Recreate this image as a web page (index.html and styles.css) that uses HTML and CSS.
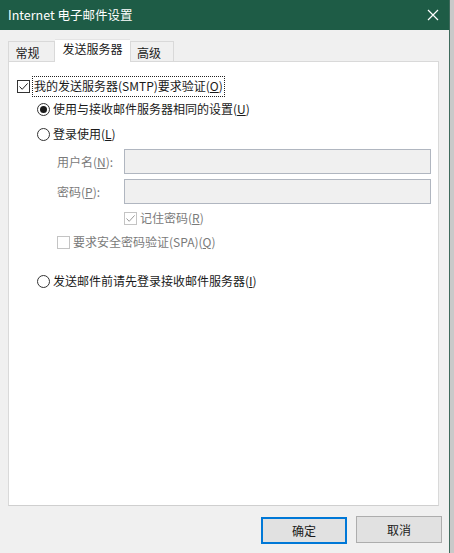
FILE: index.html
```html
<!DOCTYPE html>
<html lang="zh-CN">
<head>
<meta charset="utf-8">
<title>Internet 电子邮件设置</title>
<link rel="stylesheet" href="styles.css">
</head>
<body>
<div class="window">
  <div class="titlebar">
    <span class="title">Internet 电子邮件设置</span>
    <svg class="close" width="12" height="12" viewBox="0 0 12 12"><path d="M1 1 L11 11 M11 1 L1 11" stroke="#fff" stroke-width="1.2" fill="none"/></svg>
  </div>
  <div class="tabs">
    <div class="tab tab-general">常规</div>
    <div class="tab tab-active">发送服务器</div>
    <div class="tab tab-adv">高级</div>
  </div>
  <div class="panel">
    <div class="row row1">
      <span class="box checked"><svg width="11" height="11" viewBox="0 0 11 11"><path d="M1.5 5.5 L4.2 8.3 L9.6 2.4" stroke="#222" stroke-width="1" fill="none"/></svg></span>
      <span class="focus">我的发送服务器(SMTP)要求验证(<u>O</u>)</span>
    </div>
    <div class="row row2 indent1">
      <span class="radio on"></span>
      <span class="lbl">使用与接收邮件服务器相同的设置(<u>U</u>)</span>
    </div>
    <div class="row row3 indent1">
      <span class="radio"></span>
      <span class="lbl">登录使用(<u>L</u>)</span>
    </div>
    <div class="field row4">
      <span class="flabel">用户名(<u>N</u>):</span>
      <span class="input"></span>
    </div>
    <div class="field row5">
      <span class="flabel">密码(<u>P</u>):</span>
      <span class="input"></span>
    </div>
    <div class="row row6 indent3">
      <span class="box dis"><svg width="11" height="11" viewBox="0 0 11 11"><path d="M1.5 5.5 L4.2 8.3 L9.6 2.4" stroke="#9a9a9a" stroke-width="1" fill="none"/></svg></span>
      <span class="lbl gray">记住密码(<u>R</u>)</span>
    </div>
    <div class="row row7 indent2">
      <span class="box dis"></span>
      <span class="lbl gray">要求安全密码验证(SPA)(<u>Q</u>)</span>
    </div>
    <div class="row row8 indent1">
      <span class="radio"></span>
      <span class="lbl">发送邮件前请先登录接收邮件服务器(<u>I</u>)</span>
    </div>
  </div>
  <div class="footer">
    <button class="btn primary">确定</button>
    <button class="btn">取消</button>
  </div>
</div>
</body>
</html>
```
FILE: styles.css
```css
html, body {
  margin: 0;
  padding: 0;
}
body {
  background: #c9c9c9;
  width: 454px;
  height: 553px;
  overflow: hidden;
  font-family: "Noto Sans CJK SC", "Microsoft YaHei", sans-serif;
  font-size: 12px;
  color: #1a1a1a;
}
.window {
  width: 449px;
  height: 553px;
  background: #f0f0f0;
  border-right: 1px solid #3f6a5c;
  display: flex;
  flex-direction: column;
}
.titlebar {
  height: 30px;
  background: #1e5c46;
  color: #fff;
  display: flex;
  align-items: center;
  justify-content: space-between;
  padding: 0 9px 0 8px;
  font-size: 12.5px;
}
.title {
  line-height: 30px;
}
.close {
  margin-right: 1px;
}
.tabs {
  display: flex;
  align-items: flex-end;
  margin-top: 9px;
  padding-left: 8px;
  height: 22px;
  position: relative;
  z-index: 1;
}
.tab {
  box-sizing: border-box;
  height: 20px;
  border: 1px solid #d9d9d9;
  border-bottom: none;
  background: #f0f0f0;
  display: flex;
  align-items: center;
  justify-content: center;
  line-height: 1;
}
.tab-general {
  width: 47px;
  padding-right: 8px;
  padding-top: 3px;
}
.tab-active {
  width: 75px;
  height: 23px;
  background: #fff;
  margin-bottom: -1px;
  border-left: none;
  border-right: none;
  border-top: 1px solid #e4e4e4;
  padding-bottom: 4px;
}
.tab-adv {
  width: 44px;
  padding-right: 6px;
  padding-top: 3px;
  border-left: 1px solid #d9d9d9;
}
.panel {
  box-sizing: border-box;
  margin-left: 8px;
  width: 431px;
  height: 445px;
  background: #fff;
  border: 1px solid #d9d9d9;
  border-bottom-color: #cfcfcf;
  padding-top: 14px;
  display: flex;
  flex-direction: column;
}
.row {
  display: flex;
  align-items: center;
  height: 20px;
}
.row1 { padding-left: 8px; }
.indent1 { padding-left: 28px; }
.indent2 { padding-left: 48px; }
.indent3 { padding-left: 115px; }
.row2 { margin-top: 3px; }
.row3 { margin-top: 5px; }
.row4 { margin-top: 5px; }
.row5 { margin-top: 5px; }
.row6 { margin-top: 5px; height: 18px; }
.row7 { margin-top: 6px; height: 18px; }
.row8 { margin-top: 20px; }
.box {
  box-sizing: border-box;
  width: 13px;
  height: 13px;
  border: 1px solid #333;
  background: #fff;
  display: flex;
  align-items: center;
  justify-content: center;
  flex: none;
}
.box.dis {
  border-color: #c4c4c4;
}
.focus {
  margin-left: 3px;
  outline: 1px dotted #222;
  padding: 1px 1px 2px 1px;
  line-height: 16px;
}
.radio {
  box-sizing: border-box;
  width: 13px;
  height: 13px;
  border: 1px solid #333;
  border-radius: 50%;
  flex: none;
  display: flex;
  align-items: center;
  justify-content: center;
}
.radio.on::after {
  content: "";
  width: 7px;
  height: 7px;
  border-radius: 50%;
  background: #1a1a1a;
}
.lbl {
  margin-left: 3px;
  line-height: 16px;
}
.gray {
  color: #7a7a7a;
}
.field {
  display: flex;
  align-items: center;
  height: 25px;
  padding-left: 48px;
}
.flabel {
  width: 67px;
  color: #7a7a7a;
}
.input {
  box-sizing: border-box;
  width: 307px;
  height: 25px;
  background: #f0f0f0;
  border: 1px solid #b0b6c0;
}
.footer {
  display: flex;
  justify-content: flex-end;
  align-items: flex-start;
  gap: 9px;
  padding-top: 10px;
  padding-right: 7px;
}
.btn {
  box-sizing: border-box;
  width: 86px;
  height: 27px;
  background: #e1e1e1;
  border: 1px solid #adadad;
  font-family: "Noto Sans CJK SC", "Microsoft YaHei", sans-serif;
  font-size: 12px;
  color: #1a1a1a;
  padding: 0;
}
.btn.primary {
  border: 2px solid #0078d7;
  margin-top: 1px;
}
```
